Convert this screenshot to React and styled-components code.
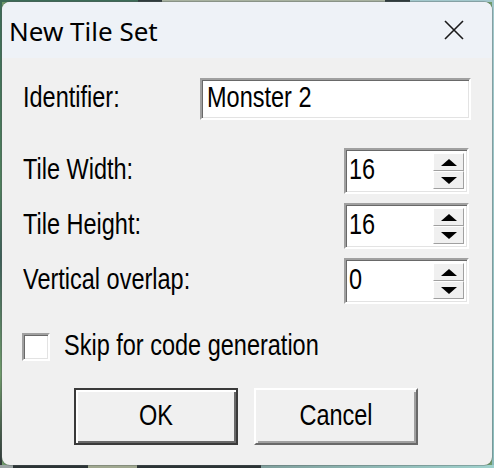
import React from 'react';
import styled, { createGlobalStyle } from 'styled-components';

const Global = createGlobalStyle`
  html, body { margin: 0; padding: 0; }
  body { width: 494px; height: 468px; overflow: hidden; background: #2c3436; }
`;

const Desktop = styled.div`
  width: 494px;
  height: 468px;
  box-sizing: border-box;
  padding: 2px 2px 3px 2px;
  background:
    linear-gradient(to right, #3c6b57 0 138px, #2f3b3d 138px 162px, #a8b2a0 162px 385px, #2f3b3d 385px 410px, #a2c8cc 410px) top / 100% 2px no-repeat,
    linear-gradient(to right, #9aa3a3 0 13px, #2c3436 13px 88px, #a0a890 88px 137px, #2c3436 137px 261px, #7f9f9c 261px, #a0d2ce) bottom / 100% 3px no-repeat,
    linear-gradient(to bottom, #3c6b57, #4f7f5c 40%, #3d5f58 55%, #6f9a6a 80%, #2c3436) left / 2px 100% no-repeat,
    linear-gradient(to bottom, #a2c8cc, #8cbcbc) right / 2px 100% no-repeat,
    #6f9a6a;
`;

const Window = styled.div`
  height: 100%;
  border-radius: 8px;
  overflow: hidden;
  background: #f0f0f0;
  box-shadow: 0 0 0 1px rgba(80, 90, 90, 0.35);
  display: flex;
  flex-direction: column;
`;

const TitleBar = styled.div`
  height: 56px;
  flex: none;
  background: #eef2f7;
  display: flex;
  align-items: center;
  justify-content: space-between;
  padding-left: 7px;
`;

const Title = styled.div`
  font-family: "Noto Sans", "Open Sans", sans-serif;
  font-size: 26px;
  color: #000;
  line-height: 1;
  padding-top: 2px;
`;

const CloseButton = styled.div`
  width: 76px;
  height: 56px;
  display: flex;
  align-items: center;
  justify-content: center;
`;

const Body = styled.div`
  flex: 1;
  display: flex;
  flex-direction: column;
  padding: 20px 21px 0 20px;
  font-family: "Liberation Sans", Arial, sans-serif;
  font-size: 23.5px;
  color: #000;
  line-height: 1;
`;

const Text = styled.span`
  display: inline-block;
  transform: scaleY(1.22);
  transform-origin: center 60%;
  white-space: nowrap;
`;

const Row = styled.div`
  display: flex;
  align-items: center;
  justify-content: space-between;
  margin-top: ${(p) => p.$top || 0}px;
`;

const Label = styled(Text)`
  padding-left: 1px;
`;

const Sunken = styled.div`
  box-sizing: border-box;
  background: #fff;
  border: 2px solid;
  border-color: #a0a0a0 #fff #fff #a0a0a0;
  box-shadow: inset 1px 1px 0 #696969, inset -1px -1px 0 #e3e3e3;
`;

const TextField = styled(Sunken)`
  width: 271px;
  height: 42px;
  display: flex;
  align-items: center;
  padding-left: 5px;
`;

const SpinBox = styled(Sunken)`
  width: 125px;
  height: 46px;
  margin-right: 2px;
  display: flex;
  align-items: stretch;
  padding: 2px 3px 2px 0;
`;

const SpinValue = styled.div`
  flex: 1;
  display: flex;
  align-items: center;
  padding-left: 3px;
`;

const SpinButtons = styled.div`
  width: 31px;
  display: flex;
  flex-direction: column;
  padding: 1px 0;
`;

const SpinButton = styled.div`
  flex: 1;
  box-sizing: border-box;
  background: #f0f0f0;
  border: 1px solid;
  border-color: #fff #a0a0a0 #a0a0a0 #fff;
  display: flex;
  align-items: center;
  justify-content: center;
`;

const Arrow = styled.div`
  width: 0;
  height: 0;
  border-left: 8px solid transparent;
  border-right: 8px solid transparent;
  ${(p) => (p.$down ? 'border-top: 7px solid #000;' : 'border-bottom: 7px solid #000;')}
`;

const CheckRow = styled.div`
  display: flex;
  align-items: center;
  gap: 14px;
  margin-top: 29px;
`;

const CheckBox = styled(Sunken)`
  width: 28px;
  height: 28px;
`;

const ButtonRow = styled.div`
  display: flex;
  gap: 16px;
  margin-top: 27px;
  padding-left: 52px;
`;

const Button = styled.div`
  box-sizing: border-box;
  width: 164px;
  height: 57px;
  background: #f0f0f0;
  display: flex;
  align-items: center;
  justify-content: center;
  border: 2px solid;
  border-color: ${(p) => (p.$default ? '#3a3a3a' : '#fff #696969 #696969 #fff')};
  box-shadow: ${(p) =>
    p.$default
      ? 'inset 2px 2px 0 #fff, inset -2px -2px 0 #696969'
      : 'inset 2px 2px 0 #f0f0f0, inset -2px -2px 0 #a0a0a0'};
`;

function Spin({ value }) {
  return (
    <SpinBox>
      <SpinValue>
        <Text>{value}</Text>
      </SpinValue>
      <SpinButtons>
        <SpinButton>
          <Arrow />
        </SpinButton>
        <SpinButton>
          <Arrow $down />
        </SpinButton>
      </SpinButtons>
    </SpinBox>
  );
}

export default function App() {
  return (
    <>
      <Global />
      <Desktop>
        <Window>
          <TitleBar>
            <Title>New Tile Set</Title>
            <CloseButton>
              <svg width="20" height="20" viewBox="0 0 20 20">
                <path d="M1 1 L19 19 M19 1 L1 19" stroke="#1a1a1a" strokeWidth="1.6" fill="none" />
              </svg>
            </CloseButton>
          </TitleBar>
          <Body>
            <Row>
              <Label>Identifier:</Label>
              <TextField>
                <Text>Monster 2</Text>
              </TextField>
            </Row>
            <Row $top={28}>
              <Label>Tile Width:</Label>
              <Spin value="16" />
            </Row>
            <Row $top={9}>
              <Label>Tile Height:</Label>
              <Spin value="16" />
            </Row>
            <Row $top={9}>
              <Label>Vertical overlap:</Label>
              <Spin value="0" />
            </Row>
            <CheckRow>
              <CheckBox />
              <Text>Skip for code generation</Text>
            </CheckRow>
            <ButtonRow>
              <Button $default>
                <Text>OK</Text>
              </Button>
              <Button>
                <Text>Cancel</Text>
              </Button>
            </ButtonRow>
          </Body>
        </Window>
      </Desktop>
    </>
  );
}
